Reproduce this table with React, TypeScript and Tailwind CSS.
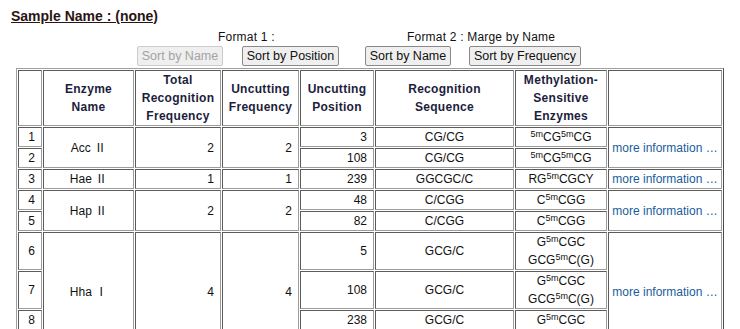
import React from "react";

const cell = "border border-[#9c9c9c] border-t-[#5c5c5c] border-l-[#5c5c5c] leading-[18px]";
const num = `${cell} text-right pr-[6px]`;
const mid = `${cell} text-center`;
const head = `${cell} text-center font-bold text-[#1d1d3c] tracking-[0.3px]`;

function M() {
  return <sup className="text-[9px]">5m</sup>;
}

function Info({ span }: { span: number }) {
  return (
    <td rowSpan={span} className={mid}>
      <a className="text-[#1a5c9e] cursor-pointer">more information …</a>
    </td>
  );
}

function Button({ label, w, disabled }: { label: string; w: string; disabled?: boolean }) {
  return (
    <button
      disabled={disabled}
      className={`${w} h-[20px] rounded-[2px] border text-[12.5px] leading-[18px] ${
        disabled
          ? "border-[#cccccc] bg-[#efefef] text-[#a3a3a3]"
          : "border-[#8a8a8a] bg-[#efefef] text-[#111]"
      }`}
    >
      {label}
    </button>
  );
}

export default function App() {
  return (
    <div className="min-h-screen bg-white text-[12px] text-[#111] font-['Liberation_Sans','Noto_Sans_CJK_JP',sans-serif]">
      <div className="pt-[8px] pl-[11px]">
        <span className="text-[14px] leading-[17px] font-bold underline text-[#2a1414]">Sample Name : (none)</span>
      </div>

      <div className="flex pl-[218px] mt-[2px] leading-[18px] tracking-[0.2px]">
        <span className="w-[189px]">Format 1 :</span>
        <span>Format 2 : Marge by Name</span>
      </div>

      <div className="flex pl-[137px]">
        <Button label="Sort by Name" w="w-[86px]" disabled />
        <div className="ml-[19px]"><Button label="Sort by Position" w="w-[97px]" /></div>
        <div className="ml-[26px]"><Button label="Sort by Name" w="w-[86px]" /></div>
        <div className="ml-[18px]"><Button label="Sort by Frequency" w="w-[112px]" /></div>
      </div>

      <table className="ml-[16px] mt-[2px] w-[708px] table-fixed border-separate border-spacing-[1px] border border-[#a0a0a0] border-r-[#4a4a4a] border-b-[#4a4a4a]">
        <thead>
          <tr>
            <th className={`${head} w-[24px]`}></th>
            <th className={`${head} w-[91px]`}>Enzyme<br />Name</th>
            <th className={`${head} w-[86px]`}>Total<br />Recognition<br />Frequency</th>
            <th className={`${head} w-[77px]`}>Uncutting<br />Frequency</th>
            <th className={`${head} w-[74px]`}>Uncutting<br />Position</th>
            <th className={`${head} w-[139px]`}>Recognition<br />Sequence</th>
            <th className={`${head} w-[92px]`}>Methylation-<br />Sensitive<br />Enzymes</th>
            <th className={`${head} w-[114px]`}></th>
          </tr>
        </thead>
        <tbody>
          <tr>
            <td className={num}>1</td>
            <td rowSpan={2} className={mid}>Acc Ⅱ</td>
            <td rowSpan={2} className={num}>2</td>
            <td rowSpan={2} className={num}>2</td>
            <td className={num}>3</td>
            <td className={mid}>CG/CG</td>
            <td className={mid}><M />CG<M />CG</td>
            <Info span={2} />
          </tr>
          <tr>
            <td className={num}>2</td>
            <td className={num}>108</td>
            <td className={mid}>CG/CG</td>
            <td className={mid}><M />CG<M />CG</td>
          </tr>
          <tr>
            <td className={num}>3</td>
            <td className={mid}>Hae Ⅱ</td>
            <td className={num}>1</td>
            <td className={num}>1</td>
            <td className={num}>239</td>
            <td className={mid}>GGCGC/C</td>
            <td className={mid}>RG<M />CGCY</td>
            <Info span={1} />
          </tr>
          <tr>
            <td className={num}>4</td>
            <td rowSpan={2} className={mid}>Hap Ⅱ</td>
            <td rowSpan={2} className={num}>2</td>
            <td rowSpan={2} className={num}>2</td>
            <td className={num}>48</td>
            <td className={mid}>C/CGG</td>
            <td className={mid}>C<M />CGG</td>
            <Info span={2} />
          </tr>
          <tr>
            <td className={num}>5</td>
            <td className={num}>82</td>
            <td className={mid}>C/CGG</td>
            <td className={mid}>C<M />CGG</td>
          </tr>
          <tr>
            <td className={num}>6</td>
            <td rowSpan={4} className={mid}>Hha Ⅰ</td>
            <td rowSpan={4} className={num}>4</td>
            <td rowSpan={4} className={num}>4</td>
            <td className={num}>5</td>
            <td className={mid}>GCG/C</td>
            <td className={mid}>G<M />CGC<br />GCG<M />C(G)</td>
            <Info span={4} />
          </tr>
          <tr>
            <td className={num}>7</td>
            <td className={num}>108</td>
            <td className={mid}>GCG/C</td>
            <td className={mid}>G<M />CGC<br />GCG<M />C(G)</td>
          </tr>
          <tr>
            <td className={num}>8</td>
            <td className={num}>238</td>
            <td className={mid}>GCG/C</td>
            <td className={mid}>G<M />CGC</td>
          </tr>
          <tr>
            <td className={num}>9</td>
            <td className={num}>241</td>
            <td className={mid}>GCG/C</td>
            <td className={mid}>G<M />CGC</td>
          </tr>
        </tbody>
      </table>
    </div>
  );
}
